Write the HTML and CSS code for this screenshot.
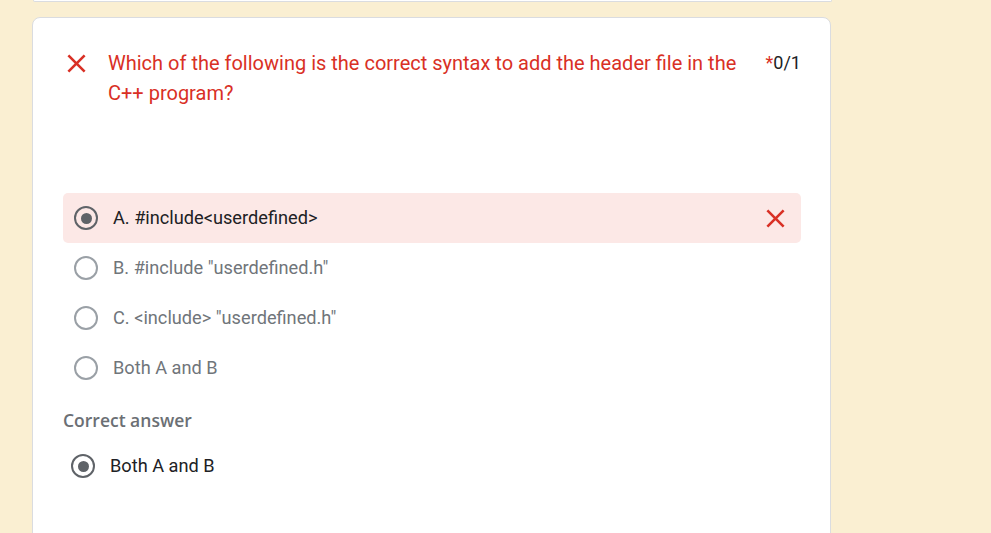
FILE: index.html
```html
<!DOCTYPE html>
<html lang="en">
<head>
<meta charset="utf-8">
<title>Quiz result</title>
<link rel="stylesheet" href="styles.css">
</head>
<body>
<div class="prev-card"></div>
<div class="card">
  <div class="q-head">
    <svg class="x-icon" viewBox="0 0 24 24" width="31" height="31" aria-hidden="true"><path d="M19 6.41L17.59 5 12 10.59 6.41 5 5 6.41 10.59 12 5 17.59 6.41 19 12 13.41 17.59 19 19 17.59 13.41 12z"/></svg>
    <div class="q-title">Which of the following is the correct syntax to add the header file in the C++ program?</div>
    <div class="q-score"><span class="req">*</span>0/1</div>
  </div>
  <div class="options">
    <div class="opt opt-wrong">
      <span class="radio radio-on"></span>
      <span class="opt-text opt-text-sel">A. #include&lt;userdefined&gt;</span>
      <svg class="x-icon x-right" viewBox="0 0 24 24" width="31" height="31" aria-hidden="true"><path d="M19 6.41L17.59 5 12 10.59 6.41 5 5 6.41 10.59 12 5 17.59 6.41 19 12 13.41 17.59 19 19 17.59 13.41 12z"/></svg>
    </div>
    <div class="opt">
      <span class="radio"></span>
      <span class="opt-text">B. #include "userdefined.h"</span>
    </div>
    <div class="opt">
      <span class="radio"></span>
      <span class="opt-text">C. &lt;include&gt; "userdefined.h"</span>
    </div>
    <div class="opt">
      <span class="radio"></span>
      <span class="opt-text">Both A and B</span>
    </div>
  </div>
  <div class="correct-label">Correct answer</div>
  <div class="opt opt-correct">
    <span class="radio radio-on"></span>
    <span class="opt-text opt-text-sel">Both A and B</span>
  </div>
</div>
</body>
</html>
```
FILE: styles.css
```css
html, body {
  margin: 0;
  padding: 0;
}
body {
  background: #faefd2;
  font-family: Roboto, "Liberation Sans", Arial, sans-serif;
  color: #202124;
  height: 533px;
  overflow: hidden;
}
.prev-card {
  margin-left: 33px;
  width: 797px;
  height: 1px;
  background: #fff;
  border: 1px solid #dadce0;
  border-top: none;
  border-radius: 0 0 8px 8px;
}
.card {
  margin-top: 15px;
  margin-left: 32px;
  width: 738px;
  background: #fff;
  border: 1px solid #dadce0;
  border-radius: 8px;
  padding: 30px 29px 60px 30px;
}
.q-head {
  display: flex;
  align-items: flex-start;
}
.x-icon {
  fill: #d93025;
  flex: none;
}
.q-head .x-icon {
  margin-left: -2px;
  margin-top: 0;
  margin-right: 16px;
}
.q-title {
  flex: 1;
  font-size: 20px;
  line-height: 30px;
  color: #d93025;
}
.q-score {
  flex: none;
  margin-left: 24px;
  font-size: 18px;
  line-height: 30px;
  color: #202124;
}
.req {
  color: #d93025;
}
.options {
  margin-top: 85px;
}
.opt {
  display: flex;
  align-items: center;
  height: 50px;
  padding: 0 10px 0 11px;
  gap: 15px;
}
.opt-wrong {
  background: #fce8e6;
  border-radius: 5px;
}
.radio {
  flex: none;
  box-sizing: border-box;
  width: 24px;
  height: 24px;
  border-radius: 50%;
  border: 2px solid #9aa0a6;
  display: flex;
  align-items: center;
  justify-content: center;
}
.radio-on {
  border-color: #5f6368;
}
.radio-on::after {
  content: "";
  width: 11px;
  height: 11px;
  border-radius: 50%;
  background: #5f6368;
}
.opt-text {
  flex: 1;
  font-size: 18.2px;
  line-height: 22px;
  margin-top: -1px;
  color: #70757a;
}
.opt-text-sel {
  color: #202124;
}
.x-right {
  margin-left: auto;
}
.correct-label {
  margin-top: 15px;
  font-family: "Open Sans", Roboto, sans-serif;
  font-weight: 600;
  font-size: 17.5px;
  line-height: 24px;
  color: #6b6f74;
}
.opt-correct {
  margin-top: 9px;
  padding-left: 8px;
}
```
